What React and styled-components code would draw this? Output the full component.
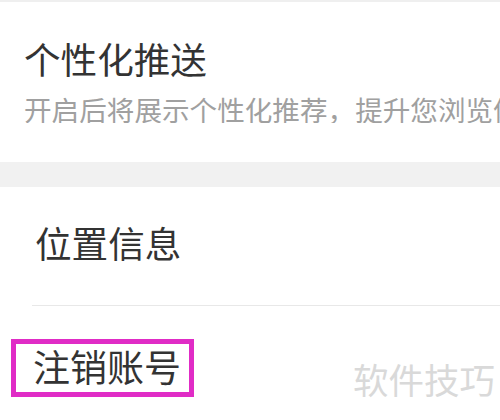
import React from 'react'
import styled, { createGlobalStyle } from 'styled-components'

const GlobalStyle = createGlobalStyle`
  html, body {
    margin: 0;
    padding: 0;
    background: #ffffff;
  }
  body {
    font-family: "Noto Sans CJK SC", "Noto Sans", sans-serif;
  }
`

const Page = styled.div`
  position: relative;
  width: 500px;
  height: 420px;
  overflow: hidden;
  background: #ffffff;
`

const TopLine = styled.div`
  height: 2px;
  background: #efefef;
`

const PushSection = styled.section`
  height: 160px;
  box-sizing: border-box;
  padding: 39px 0 0 24px;
  display: flex;
  flex-direction: column;
`

const Title = styled.div`
  font-size: ${p => p.size || 36.6}px;
  line-height: 36px;
  color: #333333;
  white-space: nowrap;
`

const Subtitle = styled.div`
  margin-top: 19px;
  font-size: 27.6px;
  line-height: 27px;
  color: #a0a0a0;
  white-space: nowrap;
  overflow: hidden;
  width: 476px;
`

const Band = styled.div`
  height: 25px;
  background: #f1f1f1;
`

const List = styled.section`
  padding-left: 32px;
`

const Row = styled.div`
  height: ${p => p.h}px;
  box-sizing: border-box;
  display: flex;
  align-items: ${p => p.align || 'center'};
  padding: ${p => p.pad || '0 0 6px 3px'};
`

const Divider = styled.div`
  height: 1px;
  background: #e8e8e8;
`

const Highlight = styled.div`
  display: inline-flex;
  margin-left: -21px;
  border: 5px solid #e02cc6;
  padding: 4px 8px 8px 17px;
`

const Watermark = styled.div`
  position: absolute;
  left: 353px;
  top: 361px;
  font-size: 35.5px;
  line-height: 36px;
  color: #d9d9d9;
  white-space: nowrap;
`

const App = () => (
  <Page>
    <GlobalStyle />
    <TopLine />
    <PushSection>
      <Title>个性化推送</Title>
      <Subtitle>开启后将展示个性化推荐，提升您浏览体验</Subtitle>
    </PushSection>
    <Band />
    <List>
      <Row h={118}>
        <Title>位置信息</Title>
      </Row>
      <Divider />
      <Row h={100} align="flex-start" pad="33px 0 0 0">
        <Highlight>
          <Title size={37}>注销账号</Title>
        </Highlight>
      </Row>
    </List>
    <Watermark>软件技巧</Watermark>
  </Page>
)

export default App
